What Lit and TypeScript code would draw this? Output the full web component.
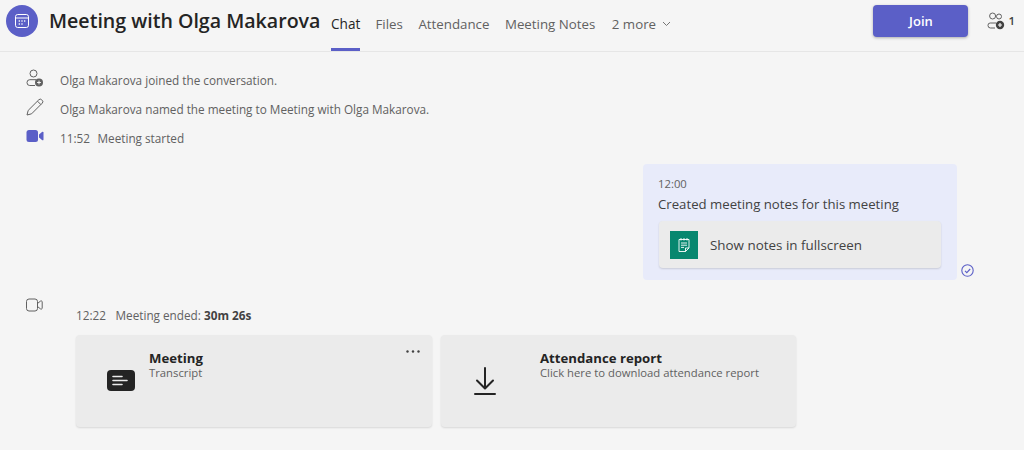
import { LitElement, html, css } from "lit";
import { customElement } from "lit/decorators.js";

const tabs = ["Files", "Attendance", "Meeting Notes"];

@customElement("app-root")
export class AppRoot extends LitElement {
  static styles = css`
    :host { display: block; width: 1024px; height: 450px; overflow: hidden; background: #f5f5f5; color: #242424; font-family: "Open Sans", "Noto Sans", sans-serif; }
    svg { display: block; flex: none; }
    header { height: 51px; border-bottom: 1px solid #e6e6e6; display: flex; align-items: flex-start; box-sizing: content-box; }
    .avatar { width: 32px; height: 32px; margin: 5px 0 0 6px; border-radius: 50%; background: #5b5fc7; display: flex; align-items: center; justify-content: center; }
    h1 { margin: 6px 0 0 11px; font-size: 19.6px; line-height: 30px; font-weight: 600; width: 271px; white-space: nowrap; }
    nav { margin-left: 11px; display: flex; height: 51px; gap: 15.5px; font-size: 13.3px; color: #616161; }
    .tab { height: 51px; box-sizing: border-box; padding-top: 14px; line-height: 20px; white-space: nowrap; }
    .tab.on { color: #242424; font-weight: 500; width: 29px; border-bottom: 3px solid #5b5fc7; font-size: 13.6px; }
    .more { display: flex; align-items: flex-start; gap: 6px; margin-left: 1px; }
    .more svg { margin-top: 7px; }
    .spacer { flex: 1; }
    .join { margin: 5px 0 0; width: 95px; height: 32px; border-radius: 4px; background: #5b5fc7; color: #fff; font-size: 13px; font-weight: 600; display: flex; align-items: center; justify-content: center; box-shadow: 0 1px 3px rgba(0,0,0,.3); }
    .people { margin: 12px 9px 0 19px; display: flex; align-items: center; gap: 3px; font-size: 11.5px; font-weight: 600; color: #424242; line-height: 18px; }
    .sys { display: flex; align-items: center; height: 29px; padding-left: 26px; font-size: 11.75px; font-weight: 500; color: #616161; white-space: nowrap; }
    .sys .ico { width: 34px; flex: none; margin-bottom: 3px; }
    .sys .time { margin-right: 7.5px; }
    .time { margin-right: 9.5px; }
    .log { padding-top: 13px; }
    .bubble-row { display: flex; padding: 12px 0 0 643px; align-items: flex-end; }
    .bubble { width: 314px; height: 116px; box-sizing: border-box; background: #e8ebfa; border-radius: 4px; padding: 12px 16px 0 15px; }
    .stamp { font-size: 11.3px; line-height: 16px; color: #616161; }
    .msg { font-size: 13.2px; line-height: 20px; color: #424242; margin-top: 2px; white-space: nowrap; }
    .note { margin: 7px 0 0 1px; height: 47px; background: #ebebeb; border-radius: 4px; box-shadow: 0 1px 2px rgba(0,0,0,.14); display: flex; align-items: center; padding-left: 11px; gap: 12px; font-size: 13.4px; font-weight: 500; color: #424242; }
    .green { width: 28px; height: 28px; background: #07876f; display: flex; align-items: center; justify-content: center; }
    .check { margin: 0 0 3px 4px; }
    .ended { display: flex; padding: 18px 0 0 26px; }
    .ended-body { margin-left: 33px; padding-top: 8px; }
    .ended-line { font-size: 11.75px; line-height: 18px; font-weight: 500; color: #616161; white-space: nowrap; }
    .ended-line b { font-weight: 700; color: #424242; }
    .cards { display: flex; gap: 9px; margin-top: 11px; }
    .card { height: 92px; background: #ebebeb; border-radius: 4px; box-shadow: 0 1px 2px rgba(0,0,0,.12); display: flex; position: relative; box-sizing: border-box; }
    .card.a { width: 356px; } .card.b { width: 355px; }
    .card .ic { width: 73px; flex: none; padding-top: 35px; box-sizing: border-box; padding-left: 31px; }
    .card.b .ic { width: 99px; padding-left: 33px; padding-top: 32px; }
    .txt { padding-top: 14px; }
    .tt { font-size: 13.2px; font-weight: 700; line-height: 18px; color: #242424; white-space: nowrap; }
    .sub { font-size: 11.3px; line-height: 12px; color: #616161; white-space: nowrap; }
    .dots { position: absolute; right: 12px; top: 15px; }
  `;

  private peopleIcon() {
    return html`<svg width="18" height="18" viewBox="0 0 18 18" fill="none" stroke="#616161" stroke-width="1">
      <circle cx="5.6" cy="4" r="3"></circle><circle cx="12" cy="4.5" r="2.5"></circle>
      <path d="M8 16H3.5A2.5 2.5 0 0 1 1 13.5v-.3A2.2 2.2 0 0 1 3.2 11H9"></path>
      <circle cx="13" cy="13" r="4.2" fill="#424242" stroke="none"></circle>
      <path d="M13 11v4M11 13h4" stroke="#f5f5f5" stroke-width="1.2"></path></svg>`;
  }

  render() {
    return html`
      <header>
        <div class="avatar"><svg width="16" height="16" viewBox="0 0 16 16" fill="none" stroke="#fff">
          <rect x="1.5" y="1.5" width="13" height="13" rx="2.2"></rect><path d="M1.5 5h13"></path>
          <path d="M4.7 8h1.2M7.4 8h1.2M10.1 8h1.2M4.7 11h1.2M7.4 11h1.2" stroke-width="1.4"></path></svg></div>
        <h1>Meeting with Olga Makarova</h1>
        <nav>
          <div class="tab on">Chat</div>
          ${tabs.map((t) => html`<div class="tab">${t}</div>`)}
          <div class="tab more">2 more
            <svg width="9" height="6" viewBox="0 0 9 6" fill="none" stroke="#757575"><path d="M1 1l3.5 3.5L8 1"></path></svg></div>
        </nav>
        <div class="spacer"></div>
        <div class="join">Join</div>
        <div class="people">${this.peopleIcon()}<span>1</span></div>
      </header>
      <div class="log">
        <div class="sys"><div class="ico"><svg width="18" height="18" viewBox="0 0 18 18" fill="none" stroke="#616161">
          <circle cx="7.5" cy="4.5" r="3.5"></circle><path d="M9 16.5H3.8A2.8 2.8 0 0 1 1 13.7v-.2A2.8 2.8 0 0 1 3.8 10.7H10"></path>
          <circle cx="13" cy="13.5" r="4" fill="#616161" stroke="none"></circle><path d="M13 11.6v3.8M11.1 13.5h3.8" stroke="#f5f5f5"></path></svg></div>
          Olga Makarova joined the conversation.</div>
        <div class="sys"><div class="ico"><svg width="18" height="18" viewBox="0 0 18 18" fill="none" stroke="#616161">
          <path d="M1 17l1.2-4.6L12.8 1.8a2 2 0 0 1 2.9 0l.5.5a2 2 0 0 1 0 2.9L5.6 15.8z M11.5 3.2l3.4 3.4"></path></svg></div>
          Olga Makarova named the meeting to Meeting with Olga Makarova.</div>
        <div class="sys"><div class="ico"><svg width="18" height="14" viewBox="0 0 18 14" fill="#5b5fc7">
          <rect x="0.5" y="1" width="11.5" height="12" rx="2.5"></rect><path d="M13 5.5l3-2.6c.7-.5 1.5-.1 1.5.7v6.8c0 .8-.8 1.2-1.5.7l-3-2.6z"></path></svg></div>
          <span class="time">11:52</span>Meeting started</div>
      </div>
      <div class="bubble-row">
        <div class="bubble">
          <div class="stamp">12:00</div>
          <div class="msg">Created meeting notes for this meeting</div>
          <div class="note">
            <div class="green"><svg width="16" height="16" viewBox="0 0 16 16" fill="none" stroke="#fff" stroke-width=".9">
              <path d="M3 2.5h10v8.5l-3.5 3.5H3z M13 11H9.5v3.5 M5 1v2.5M8 1v2.5M11 1v2.5 M5 6h6M5 8.2h6M5 10.4h3"></path></svg></div>
            Show notes in fullscreen
          </div>
        </div>
        <svg class="check" width="13" height="13" viewBox="0 0 13 13" fill="none" stroke="#5b5fc7" stroke-width="1.1">
          <circle cx="6.5" cy="6.5" r="5.7"></circle><path d="M4 6.8l1.8 1.8L9.2 5"></path></svg>
      </div>
      <div class="ended">
        <svg width="17" height="14" viewBox="0 0 17 14" fill="none" stroke="#616161" stroke-width="1">
          <rect x="0.5" y="1" width="11" height="12" rx="2.5"></rect><path d="M11.5 5.5l3-2.4c.6-.5 1.7-.1 1.7.7v6.4c0 .8-1.1 1.2-1.7.7l-3-2.4"></path></svg>
        <div class="ended-body">
          <div class="ended-line"><span class="time">12:22</span>Meeting ended: <b>30m 26s</b></div>
          <div class="cards">
            <div class="card a">
              <div class="ic"><svg width="28" height="21" viewBox="0 0 28 21">
                <rect width="28" height="21" rx="4" fill="#242424"></rect>
                <path d="M6 6.5h9M6 10.5h14M6 14.5h9" stroke="#ebebeb" stroke-width="1.6" stroke-linecap="round"></path></svg></div>
              <div class="txt"><div class="tt">Meeting</div><div class="sub">Transcript</div></div>
              <svg class="dots" width="14" height="3" viewBox="0 0 14 3" fill="#424242">
                <circle cx="1.5" cy="1.5" r="1.2"></circle><circle cx="7" cy="1.5" r="1.2"></circle><circle cx="12.5" cy="1.5" r="1.2"></circle></svg>
            </div>
            <div class="card b">
              <div class="ic"><svg width="22" height="28" viewBox="0 0 22 28" fill="none" stroke="#242424" stroke-width="2" stroke-linecap="round" stroke-linejoin="round">
                <path d="M11 1v20M3 13.5l8 8 8-8M1 27h20"></path></svg></div>
              <div class="txt"><div class="tt">Attendance report</div><div class="sub">Click here to download attendance report</div></div>
            </div>
          </div>
        </div>
      </div>
    `;
  }
}
